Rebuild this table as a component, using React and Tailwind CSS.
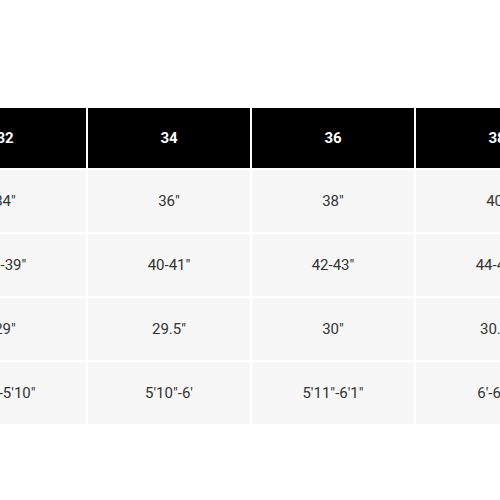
import React from 'react';

const sizes = ['32', '34', '36', '38', '40'];
const rows = [
  ['34"', '36"', '38"', '40"', '42"'],
  ['38-39"', '40-41"', '42-43"', '44-45"', '46-47"'],
  ['29"', '29.5"', '30"', '30.5"', '31"'],
  ['5\'9"-5\'10"', '5\'10"-6\'', '5\'11"-6\'1"', '6\'-6\'2"', '6\'1"-6\'3"'],
];

const App = () => {
  return (
    <div className="w-[500px] h-[500px] bg-white overflow-hidden" style={{ fontFamily: 'Roboto, "Liberation Sans", sans-serif' }}>
      <div className="pt-[106px] -ml-[78px]">
        <table className="border-separate border-spacing-[2px] table-fixed">
          <thead>
            <tr>
              {sizes.map((s) => (
                <th key={s} className="w-[162px] min-w-[162px] h-[60px] bg-black text-white text-[15px] font-bold text-center p-0">
                  {s}
                </th>
              ))}
            </tr>
          </thead>
          <tbody>
            {rows.map((row, i) => (
              <tr key={i}>
                {row.map((cell, j) => (
                  <td key={j} className="w-[162px] h-[62px] bg-[#f7f7f7] text-[#333] text-[15px] text-center p-0">
                    {cell}
                  </td>
                ))}
              </tr>
            ))}
          </tbody>
        </table>
      </div>
    </div>
  );
};

export default App;
